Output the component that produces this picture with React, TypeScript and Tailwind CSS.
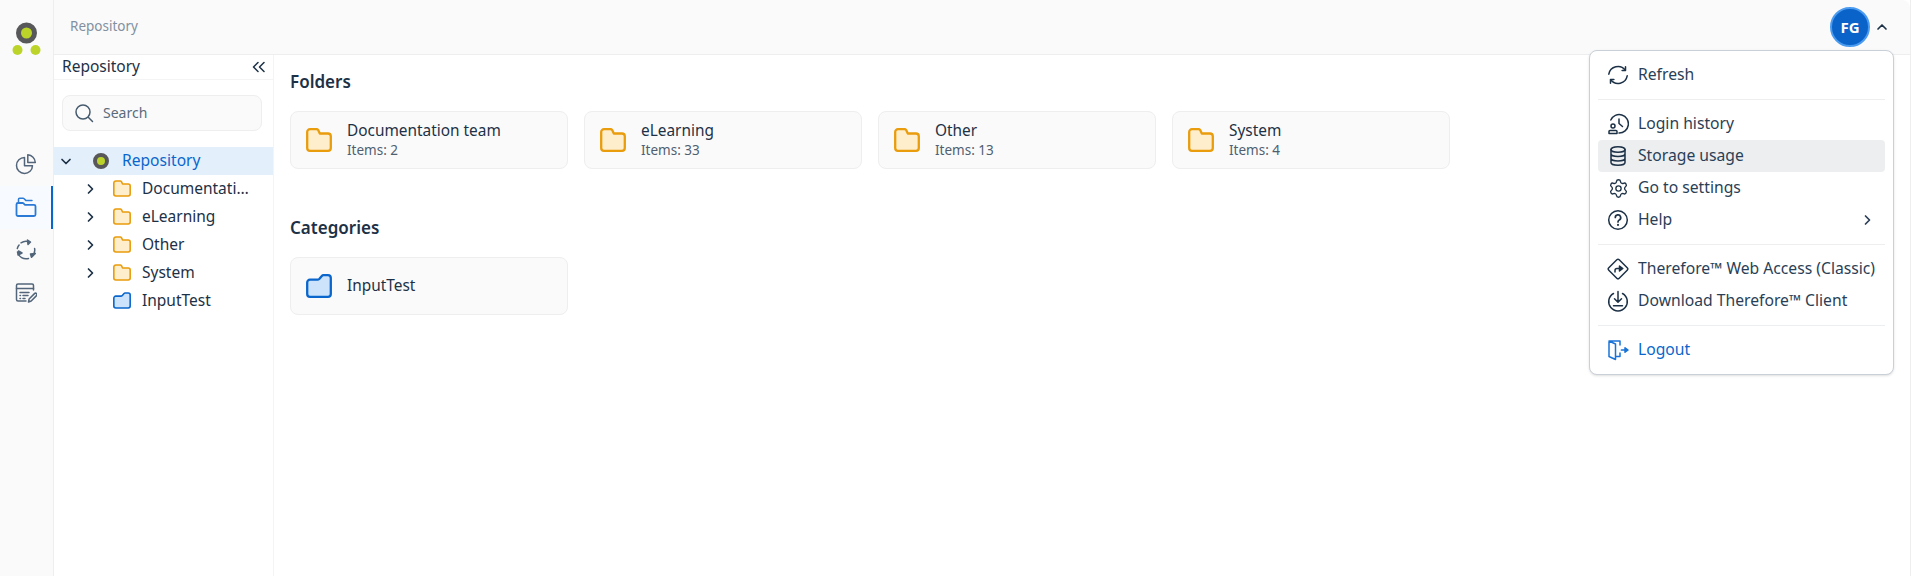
import React from "react";
import { Settings } from "lucide-react";

const FONT = "font-['Noto_Sans','Liberation_Sans',sans-serif]";

function LogoMark() {
  return (
    <svg width="38" height="38" viewBox="0 0 38 38" fill="none">
      <circle cx="18.5" cy="14" r="8" fill="#bcd42a" stroke="#58585a" strokeWidth="5" />
      <circle cx="9.5" cy="31" r="5" fill="#bcd42a" />
      <circle cx="27.5" cy="31" r="5" fill="#bcd42a" />
    </svg>
  );
}

function FolderIcon({ w = 26, h = 24 }: { w?: number; h?: number }) {
  return (
    <svg width={w} height={h} viewBox="0 0 26 24" fill="none">
      <path
        d="M1.2 4A2.800 2.800 0 0 1 4 1.200h6.500c.7 0 1.300.3 1.700.9L13.800 5.500H22A2.800 2.800 0 0 1 24.800 8.300V20A2.800 2.800 0 0 1 22 22.800H4A2.800 2.800 0 0 1 1.200 20Z"
        fill="#feeecb"
        stroke="#e99c0c"
        strokeWidth="2.300"
        strokeLinejoin="round"
      />
    </svg>
  );
}

function CategoryIcon({ w = 26, h = 24 }: { w?: number; h?: number }) {
  return (
    <svg width={w} height={h} viewBox="0 0 26 24" fill="none">
      <path
        d="M24.800 4v16a2.800 2.800 0 0 1-2.800 2.800H4A2.800 2.800 0 0 1 1.200 20V8.500A2.800 2.800 0 0 1 4 5.700h7.500c.7 0 1.200-.2 1.700-.7l2.400-2.800c.5-.6 1.100-1 1.900-1H22A2.800 2.800 0 0 1 24.800 4Z"
        fill="#cce3fb"
        stroke="#0a66cc"
        strokeWidth="2.300"
        strokeLinejoin="round"
      />
    </svg>
  );
}

function Chevron({ dir, className = "" }: { dir: "right" | "down" | "up"; className?: string }) {
  const d = dir === "right" ? "M4.500 2 8.500 6 4.500 10" : dir === "down" ? "M2 4.500 6 8.500 10 4.500" : "M2 8 6 4 10 8";
  return (
    <svg width="12" height="12" viewBox="0 0 12 12" fill="none" className={className}>
      <path d={d} stroke="currentColor" strokeWidth="1.700" strokeLinecap="round" strokeLinejoin="round" />
    </svg>
  );
}

function RailButton({ active, children }: { active?: boolean; children: React.ReactNode }) {
  return (
    <div
      className={
        "flex h-[43px] w-full items-center justify-center border-r-2 pb-0.5 " +
        (active ? "border-[#0a66cc] bg-[#f7fbff] text-[#2a7ad6]" : "border-transparent text-[#53657a]")
      }
    >
      {children}
    </div>
  );
}

function TreeRow({ label, category }: { label: string; category?: boolean }) {
  return (
    <div className="flex h-7 items-center pl-[30px]">
      <div className="flex w-[29px] text-[#1d3146]">{!category && <Chevron dir="right" />}</div>
      <div className="flex w-[29px] pb-px">{category ? <CategoryIcon w={18} h={17} /> : <FolderIcon w={18} h={17} />}</div>
      <span className="min-w-0 flex-1 truncate pr-4 text-[15.500px] text-[#1d3146]">{label}</span>
    </div>
  );
}

function Card({ title, items, category }: { title: string; items?: number; category?: boolean }) {
  return (
    <div className="flex h-[58px] w-[278px] items-center rounded-lg border border-[#eeeeee] bg-[#fafafa] pl-[15px]">
      <div className="mr-[15px] flex">{category ? <CategoryIcon /> : <FolderIcon />}</div>
      <div className="flex flex-col pb-px">
        <span className="text-[15.400px] leading-5 text-[#1d3146]">{title}</span>
        {items !== undefined && <span className="text-[13.500px] leading-[18px] text-[#4f5f70]">Items: {items}</span>}
      </div>
    </div>
  );
}

function MenuItem({
  icon,
  label,
  active,
  trailing,
  blue,
}: {
  icon: React.ReactNode;
  label: string;
  active?: boolean;
  trailing?: boolean;
  blue?: boolean;
}) {
  return (
    <div
      className={
        "flex h-8 items-center rounded pl-2.5 pr-3 " +
        (active ? "bg-[#eceef0] " : "") +
        (blue ? "text-[#0a66cc]" : "text-[#2a3f57]")
      }
    >
      <span className={"mr-2.5 flex w-5 justify-center " + (blue ? "text-[#1a74d8]" : "text-[#1d3146]")}>{icon}</span>
      <span className="flex-1 whitespace-nowrap pb-px text-[15.700px]">{label}</span>
      {trailing && <Chevron dir="right" />}
    </div>
  );
}

function Ico({ children }: { children: React.ReactNode }) {
  return (
    <svg className="shrink-0" width="22" height="22" viewBox="0 0 22 22" fill="none" stroke="currentColor" strokeWidth="1.500" strokeLinecap="round" strokeLinejoin="round">
      {children}
    </svg>
  );
}

const Sep = () => <div className="my-2 h-px bg-[#eceeef]" />;

export default function App() {
  return (
    <div className={"relative flex h-[576px] w-[1913px] overflow-hidden bg-white " + FONT}>
      {/* Rail */}
      <aside className="flex w-[54px] shrink-0 flex-col border-r border-[#eeeeee] bg-[#fafafa]">
        <div className="flex h-[110px] justify-center pt-[19px]">
          <LogoMark />
        </div>
        <div className="flex flex-col pt-[33px]">
          <RailButton>
            <Ico>
              <path d="M9.500 4.500a8 8 0 1 0 8 8.200h-8V4.500Z" />
              <path d="M12.800 1.800a8 8 0 0 1 7.500 7.700h-7.500V1.800Z" />
            </Ico>
          </RailButton>
          <RailButton active>
            <Ico>
              <path d="M3.500 6.500V3.300c0-.6.400-1 1-1h3.600c.4 0 .7.100 1 .4l1.700 1.700h6.200" />
              <path d="M1.500 8.500a1.500 1.500 0 0 1 1.500-1.500h4.500c.4 0 .8.100 1 .4L10 8.800h9A1.500 1.500 0 0 1 20.500 10.300v8.200A1.500 1.500 0 0 1 19 20H3a1.500 1.500 0 0 1-1.500-1.500V8.500Z" strokeWidth="1.800" />
            </Ico>
          </RailButton>
          <RailButton>
            <Ico>
              <path d="M6 3.800A8.800 8.800 0 0 1 14 2.700" />
              <path d="M19.600 9.500a8.800 8.800 0 0 1-3 8.300" />
              <path d="M13.500 19.500a8.800 8.800 0 0 1-11-6.500" />
              <path d="M2.300 9.500a8.800 8.800 0 0 1 1.800-3.500" />
              <path d="M12.500 1 15.500 3l-2.500 2.500Z" fill="currentColor" />
              <path d="M20.300 14.500l-3.800 3.800-1-3.300Z" fill="currentColor" />
              <path d="M3 16l.5-4 3.500 2Z" fill="currentColor" />
            </Ico>
          </RailButton>
          <RailButton>
            <Ico>
              <path d="M18.500 8V3.500A1.500 1.500 0 0 0 17 2H3a1.500 1.500 0 0 0-1.500 1.500v14A1.500 1.500 0 0 0 3 19h8" />
              <path d="M1.500 6.500h17M5 10.500h9M8 13.500h5M5 13.500h.5M5 16.500h.5M8 16.500h2" />
              <path d="M13.500 20l.6-3 5.400-5.400a1.300 1.300 0 0 1 2 2L16.200 19l-2.700 1Z" />
            </Ico>
          </RailButton>
        </div>
      </aside>

      <div className="mr-0.5 flex min-w-0 flex-1 flex-col border-r border-[#eeeeee]">
        {/* Top bar */}
        <header className="flex h-[55px] shrink-0 items-center rounded-tr-lg border-b border-[#eeeeee] bg-[#fafafa] pl-4 pr-[22px]">
          <span className="flex-1 pb-0.5 text-[13.500px] text-[#8290a0]">Repository</span>
          <div className="flex h-10 w-10 items-center justify-center rounded-full border-2 border-[#4a9bf0] bg-[#0a63c8] text-[15px] font-bold text-white">
            FG
          </div>
          <Chevron dir="up" className="ml-1.5 text-[#1d3146]" />
        </header>

        <div className="flex min-h-0 flex-1">
          {/* Sidebar */}
          <nav className="flex w-[220px] shrink-0 flex-col border-r border-[#f4f4f4]">
            <div className="flex h-[25px] items-center justify-between border-b border-[#f4f4f4] pl-2 pr-[7px]">
              <span className="pb-px text-[15.500px] text-[#1d3146]">Repository</span>
              <span className="flex text-[#1d3146]">
                <svg width="14" height="12" viewBox="0 0 14 12" fill="none" stroke="currentColor" strokeWidth="1.500" strokeLinecap="round" strokeLinejoin="round">
                  <path d="M6 1.500 1.500 6 6 10.500M12 1.500 7.500 6 12 10.500" />
                </svg>
              </span>
            </div>
            <div className="px-2 pb-4 pt-[15px]">
              <div className="flex h-9 w-[200px] items-center rounded-lg border border-[#eeeeee] bg-[#fafafa] pl-[11px] text-[#465a6e]">
                <svg width="20" height="20" viewBox="0 0 20 20" fill="none" stroke="currentColor" strokeWidth="1.500" strokeLinecap="round">
                  <circle cx="9" cy="9" r="7" />
                  <path d="m14.500 14.500 4 4" />
                </svg>
                <span className="ml-[9px] pb-0.5 text-[14px] text-[#5a6b7c]">Search</span>
              </div>
            </div>
            <div className="flex h-7 items-center bg-[#e3f0fc] pl-[6px]">
              <div className="flex w-[30px] text-[#1d3146]">
                <Chevron dir="down" />
              </div>
              <div className="mr-2.5 flex">
                <svg width="22" height="22" viewBox="0 0 22 22">
                  <circle cx="11" cy="11" r="6" fill="#bcd42a" stroke="#58585a" strokeWidth="4" />
                </svg>
              </div>
              <span className="text-[15.600px] text-[#0a66cc]">Repository</span>
            </div>
            <TreeRow label="Documentation team" />
            <TreeRow label="eLearning" />
            <TreeRow label="Other" />
            <TreeRow label="System" />
            <TreeRow label="InputTest" category />
          </nav>

          {/* Content */}
          <main className="min-w-0 flex-1 pl-4 pt-4">
            <h2 className="pb-0.5 text-[17px] font-semibold leading-[22px] text-[#1d3146]">Folders</h2>
            <div className="mt-4 flex gap-4">
              <Card title="Documentation team" items={2} />
              <Card title="eLearning" items={33} />
              <Card title="Other" items={13} />
              <Card title="System" items={4} />
            </div>
            <h2 className="mt-12 pb-0.5 text-[17px] font-semibold leading-[22px] text-[#1d3146]">Categories</h2>
            <div className="mt-4 flex gap-4">
              <Card title="InputTest" category />
            </div>
          </main>
        </div>
      </div>

      {/* User menu */}
      <div className="absolute left-[1589px] top-[50px] w-[305px] rounded-lg border border-[#c9d0d8] bg-white p-2 shadow-sm">
        <MenuItem
          label="Refresh"
          icon={
            <Ico>
              <path d="M1.800 10.200a9.300 9.300 0 0 1 16.500-4" />
              <path d="M20.200 11.800a9.300 9.300 0 0 1-16.500 4" />
              <path d="M18.500 2.800v3.600h-3.400M3.500 19.200v-3.600h3.400" />
            </Ico>
          }
        />
        <Sep />
        <MenuItem
          label="Login history"
          icon={
            <Ico>
              <path d="M3.800 7A9.200 9.200 0 1 1 12 20" />
              <path d="M12 6v4.500l3.500 3" />
              <circle cx="6" cy="13" r="2" />
              <path d="M2 20.500v-2a1 1 0 0 1 1-1h6a1 1 0 0 1 1 1v2H2Z" />
            </Ico>
          }
        />
        <MenuItem
          active
          label="Storage usage"
          icon={
            <Ico>
              <ellipse cx="11" cy="4.500" rx="7" ry="2.800" />
              <path d="M4 4.500v13c0 1.500 3 2.800 7 2.800s7-1.300 7-2.800v-13M4 8.800c0 1.500 3 2.800 7 2.800s7-1.300 7-2.800M4 13.200c0 1.500 3 2.800 7 2.800s7-1.300 7-2.800" />
            </Ico>
          }
        />
        <MenuItem label="Go to settings" icon={<Settings className="shrink-0" size={21} strokeWidth={1.5} />} />
        <MenuItem
          trailing
          label="Help"
          icon={
            <Ico>
              <circle cx="11" cy="11" r="9.300" />
              <path d="M8.300 8.500a2.700 2.700 0 1 1 4 2.400c-.8.500-1.300 1-1.300 2" strokeWidth="1.700" />
              <path d="M11 15.800v.1" strokeWidth="2" />
            </Ico>
          }
        />
        <Sep />
        <MenuItem
          label="Therefore™ Web Access (Classic)"
          icon={
            <Ico>
              <path d="M9.800 1.800a1.700 1.700 0 0 1 2.400 0l8 8a1.700 1.700 0 0 1 0 2.400l-8 8a1.700 1.700 0 0 1-2.400 0l-8-8a1.700 1.700 0 0 1 0-2.400l8-8Z" />
              <path d="M8 14v-1.500a2 2 0 0 1 2-2h3" />
              <path d="M12.500 8l3.300 2.500-3.300 2.500Z" fill="currentColor" />
            </Ico>
          }
        />
        <MenuItem
          label="Download Therefore™ Client"
          icon={
            <Ico>
              <path d="M6.500 3.500a9.300 9.300 0 1 0 9 0" />
              <path d="M11 1.500v10.500M7.500 8.800l3.500 3.500 3.500-3.500M6.500 15.800h9" />
            </Ico>
          }
        />
        <Sep />
        <MenuItem
          blue
          label="Logout"
          icon={
            <Ico>
              <path d="M2 2v15.500l6.500 3V5L2 2h11v4M9 17.500h4V14" />
              <path d="M14.500 11h4.500" strokeWidth="1.700" />
              <path d="M18 8.800l3 2.200-3 2.200Z" fill="currentColor" />
            </Ico>
          }
        />
      </div>
    </div>
  );
}
